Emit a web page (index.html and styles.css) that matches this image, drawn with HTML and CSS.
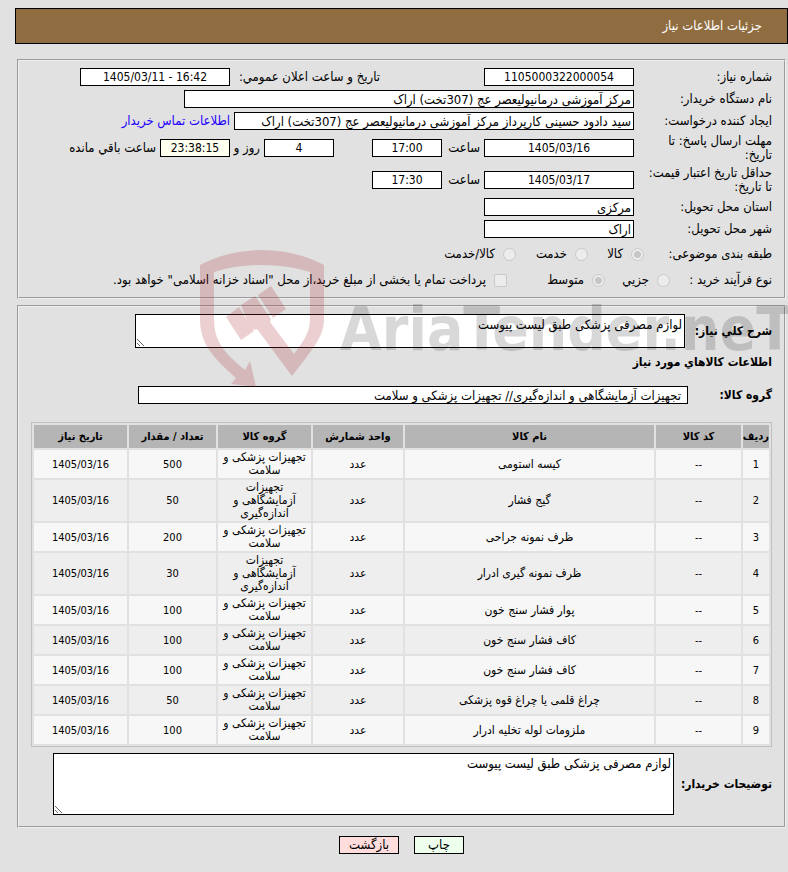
FILE: index.html
```html
<!DOCTYPE html>
<html lang="fa" dir="rtl">
<head>
<meta charset="utf-8">
<title>جزئیات اطلاعات نیاز</title>
<link rel="stylesheet" href="styles.css">
</head>
<body>
<div class="page">
  <header class="title-bar"><h1>جزئیات اطلاعات نیاز</h1></header>
  <main>
    <fieldset class="panel summary">
      <div class="row">
        <label class="name" for="need-no">شماره نیاز:</label>
        <span class="first-group"><input class="num w150" id="need-no" value="1105000322000054" readonly></span>
        <label class="announce" for="announce">تاریخ و ساعت اعلان عمومي:</label>
        <input class="num w150" id="announce" value="1405/03/11 - 16:42" readonly>
      </div>
      <div class="row">
        <label class="name" for="org">نام دستگاه خریدار:</label>
        <input class="w450" id="org" value="مرکز آموزشی درمانیولیعصر عج (307تخت) اراک" readonly>
      </div>
      <div class="row">
        <label class="name" for="creator">ایجاد کننده درخواست:</label>
        <input class="w400" id="creator" value="سید دادود حسینی کارپرداز مرکز آموزشی درمانیولیعصر عج (307تخت) اراک" readonly>
        <a class="contact" href="#contact">اطلاعات تماس خریدار</a>
      </div>
      <div class="row tall">
        <label class="name" for="deadline">مهلت ارسال پاسخ: تا تاریخ:</label>
        <span class="time-group">
          <input class="num w150" id="deadline" value="1405/03/16" readonly>
          <label class="hour" for="deadline-hour">ساعت</label>
          <input class="num w70" id="deadline-hour" value="17:00" readonly>
        </span>
        <input class="num w70" id="days" value="4" readonly>
        <label class="days" for="days">روز و</label>
        <input class="num w70 countdown" id="left" value="23:38:15" readonly>
        <label class="remaining" for="left">ساعت باقي مانده</label>
      </div>
      <div class="row tall">
        <label class="name" for="valid">حداقل تاریخ اعتبار قیمت: تا تاریخ:</label>
        <span class="time-group">
          <input class="num w150" id="valid" value="1405/03/17" readonly>
          <label class="hour" for="valid-hour">ساعت</label>
          <input class="num w70" id="valid-hour" value="17:30" readonly>
        </span>
      </div>
      <div class="row">
        <label class="name" for="province">استان محل تحویل:</label>
        <input class="w150" id="province" value="مرکزی" readonly>
      </div>
      <div class="row">
        <label class="name" for="city">شهر محل تحویل:</label>
        <input class="w150" id="city" value="اراک" readonly>
      </div>
      <div class="row options kind">
        <span class="name">طبقه بندی موضوعی:</span>
        <label class="option"><input type="radio" name="kind" checked disabled><span>کالا</span></label>
        <label class="option wide"><input type="radio" name="kind" disabled><span>خدمت</span></label>
        <label class="option last"><input type="radio" name="kind" disabled><span>کالا/خدمت</span></label>
      </div>
      <div class="row options process">
        <span class="name">نوع فرآیند خرید :</span>
        <label class="option"><input type="radio" name="process" disabled><span>جزیي</span></label>
        <label class="option wide"><input type="radio" name="process" checked disabled><span>متوسط</span></label>
        <label class="option last"><input type="checkbox" disabled><span>پرداخت تمام یا بخشی از مبلغ خرید،از محل "اسناد خزانه اسلامی" خواهد بود.</span></label>
      </div>
    </fieldset>

    <fieldset class="panel details">
      <div class="area-row">
        <label class="desc-label" for="desc">شرح کلي نیاز:</label>
        <textarea class="desc" id="desc" readonly>لوازم مصرفی پزشکی طبق لیست پیوست</textarea>
      </div>
      <h2>اطلاعات کالاهاي مورد نیاز</h2>
      <div class="group-row">
        <label for="group">گروه کالا:</label>
        <input class="w550" id="group" value="تجهیزات آزمایشگاهی و اندازه‌گیری// تجهیزات پزشکی و سلامت" readonly>
      </div>
      <table>
        <colgroup><col class="c-no"><col class="c-code"><col><col class="c-unit"><col class="c-group"><col class="c-qty"><col class="c-date"></colgroup>
        <thead>
          <tr><th>ردیف</th><th>کد کالا</th><th>نام کالا</th><th>واحد شمارش</th><th>گروه کالا</th><th>تعداد / مقدار</th><th>تاریخ نیاز</th></tr>
        </thead>
        <tbody>
          <tr><td class="n">1</td><td class="n">--</td><td>کیسه استومی</td><td>عدد</td><td>تجهیزات پزشکی و سلامت</td><td class="n">500</td><td class="n">1405/03/16</td></tr>
          <tr><td class="n">2</td><td class="n">--</td><td>گیج فشار</td><td>عدد</td><td>تجهیزات آزمایشگاهی و اندازه‌گیری</td><td class="n">50</td><td class="n">1405/03/16</td></tr>
          <tr><td class="n">3</td><td class="n">--</td><td>ظرف نمونه جراحی</td><td>عدد</td><td>تجهیزات پزشکی و سلامت</td><td class="n">200</td><td class="n">1405/03/16</td></tr>
          <tr><td class="n">4</td><td class="n">--</td><td>ظرف نمونه گیری ادرار</td><td>عدد</td><td>تجهیزات آزمایشگاهی و اندازه‌گیری</td><td class="n">30</td><td class="n">1405/03/16</td></tr>
          <tr><td class="n">5</td><td class="n">--</td><td>پوار فشار سنج خون</td><td>عدد</td><td>تجهیزات پزشکی و سلامت</td><td class="n">100</td><td class="n">1405/03/16</td></tr>
          <tr><td class="n">6</td><td class="n">--</td><td>کاف فشار سنج خون</td><td>عدد</td><td>تجهیزات پزشکی و سلامت</td><td class="n">100</td><td class="n">1405/03/16</td></tr>
          <tr><td class="n">7</td><td class="n">--</td><td>کاف فشار سنج خون</td><td>عدد</td><td>تجهیزات پزشکی و سلامت</td><td class="n">100</td><td class="n">1405/03/16</td></tr>
          <tr><td class="n">8</td><td class="n">--</td><td>چراغ قلمی یا چراغ قوه پزشکی</td><td>عدد</td><td>تجهیزات پزشکی و سلامت</td><td class="n">50</td><td class="n">1405/03/16</td></tr>
          <tr><td class="n">9</td><td class="n">--</td><td>ملزومات لوله تخلیه ادرار</td><td>عدد</td><td>تجهیزات پزشکی و سلامت</td><td class="n">100</td><td class="n">1405/03/16</td></tr>
        </tbody>
      </table>
      <div class="area-row">
        <label class="notes-label" for="notes">توضیحات خریدار:</label>
        <textarea class="notes" id="notes" readonly>لوازم مصرفی پزشکی طبق لیست پیوست</textarea>
      </div>
    </fieldset>
    <div class="actions">
      <button class="print" type="button">چاپ</button>
      <button class="back" type="button">بازگشت</button>
    </div>
  </main>
  <div class="watermark" dir="ltr">
    <svg class="shield" width="126" height="138" viewBox="199 249 126 138" aria-hidden="true">
      <path d="M200 265Q229 250 262 250Q295 250 324 265V318C324 335 317 344 292 376L257 329C252 331 250 328 241 305L255 296L271 319L270 322L294 354C305 339 310 332 310 318V272Q288 265 262 265Q236 265 214 272V318C214 340 222 351 245 370L250 361L256 387L231 384L236 378C210 355 200 342 200 318Z"/>
      <path d="M226 317L239 307L254 331L241 340ZM258 295L271 286L286 309L273 318Z"/>
    </svg>
    <span class="wordmark">AriaTender.neT</span>
  </div>
</div>
</body>
</html>
```
FILE: styles.css
```css
* { box-sizing: border-box; }
body {
  margin: 0;
  background: #e1e1e1;
  color: #000;
  font: 13px/14px "DejaVu Sans Condensed", "DejaVu Sans", sans-serif;
}
.page { position: relative; padding: 8px 0 18px 15px; }
.title-bar {
  display: flex;
  align-items: center;
  height: 36px;
  padding: 0 25px;
  border: 1px solid #000;
  background: #8f6d41;
  color: #fff;
}
h1 { margin: 0; font-size: 13px; font-weight: normal; }
main { padding-top: 15px; }
.panel {
  min-width: 0;
  margin: 0 2px 6px;
  border: 2px groove threedface;
}
.summary { padding: 5px 12px; }
.details { padding: 7px 12px 11px; margin-bottom: 8px; }

.row { display: flex; align-items: center; height: 22px; }
.tall { height: 32px; }
.row .name { flex: none; width: 138px; padding-left: 8px; }
.row input:not([type]) { flex: none; }
input:not([type]), textarea {
  margin: 0;
  border: 1px solid #000;
  border-radius: 0;
  background: #fff;
  color: #000;
  font: inherit;
  outline: none;
}
input:not([type]) { height: 18px; padding: 0 2px; }
input.num { direction: ltr; text-align: center; font-size: 12px; }
input.countdown { background: #fffff0; }
.w70 { width: 70px; }
.w150 { width: 150px; }
.w400 { width: 400px; }
.w450 { width: 450px; }
.w550 { width: 550px; }
.first-group { flex: none; width: 254px; }
.first-group input { display: block; }
.announce { width: 150px; }
.time-group { display: flex; align-items: center; flex: none; width: 300px; }
.hour { width: 42px; padding-right: 4px; }
.days { width: 34px; padding-right: 4px; }
.remaining { padding-right: 4px; }
.contact { padding-right: 4px; color: #20f; text-decoration: none; }

.options { height: 28px; }
.process { height: 24px; }
.option { display: flex; align-items: center; gap: 8px; flex: none; }
.option span { white-space: nowrap; }
.kind .name { width: 128px; padding: 0; }
.kind .option { width: 56px; }
.kind .wide { width: 72px; }
.process .name { width: 102px; padding: 0; }
.process .option { width: 65px; }
.process .wide { width: 98px; }
.options .last { width: auto; }
.option input {
  appearance: none;
  flex: none;
  width: 13px;
  height: 13px;
  margin: 0;
  border: 1px solid #c9c9c9;
  border-radius: 50%;
  background: #ececec;
}
.option input:checked { background: radial-gradient(circle, #c6c6c6 3px, #ececec 4px); }
.option input[type="checkbox"] { border-radius: 2px; }

.area-row { display: flex; align-items: center; }
.area-row label, .group-row label, h2 { font-size: 12px; font-weight: bold; }
.area-row label { flex: none; white-space: nowrap; }
.desc-label { width: 87px; }
.notes-label { width: 98px; }
textarea { display: block; padding: 2px; line-height: 16px; resize: both; overflow: hidden; }
.desc { width: 550px; height: 34px; }
.notes { width: 621px; height: 62px; }
h2 { margin: 7px 0 17px; line-height: 14px; }
.group-row { display: flex; align-items: center; }
.group-row label { flex: none; width: 84px; }
.group-row input:not([type]) { padding: 0 6px; }

table {
  width: 100%;
  margin: 18px 0 6px;
  table-layout: fixed;
  border: 1px solid #c0c0c0;
  border-collapse: separate;
  border-spacing: 2px;
  font-size: 12px;
  line-height: 13px;
  text-align: center;
}
.c-no { width: 26px; }
.c-code { width: 85px; }
.c-unit { width: 90px; }
.c-group { width: 93px; }
.c-qty { width: 87px; }
.c-date { width: 93px; }
th { height: 23px; padding: 0; background: #b5b5b5; font-size: 11px; }
td { padding: 1px 3px; background: #f7f7f7; }
tbody tr:nth-child(even) td { background: #eee; }
td.n { font-size: 11px; }

.actions { display: flex; justify-content: center; gap: 15px; }
.actions button {
  height: 18px;
  padding: 0;
  border: 1px solid #000;
  color: #000;
  font: inherit;
}
.print { width: 50px; background: #efe; }
.back { width: 60px; background: #fdd; }

.watermark {
  position: absolute;
  top: 249px;
  left: 0;
  right: 0;
  display: flex;
  padding-left: 199px;
  gap: 15px;
  overflow: hidden;
  pointer-events: none;
}
.shield { flex: none; fill: #a92932; opacity: 0.22; }
.wordmark {
  padding-top: 45px;
  font-size: 60px;
  font-weight: bold;
  line-height: 70px;
  opacity: 0.15;
}
```
